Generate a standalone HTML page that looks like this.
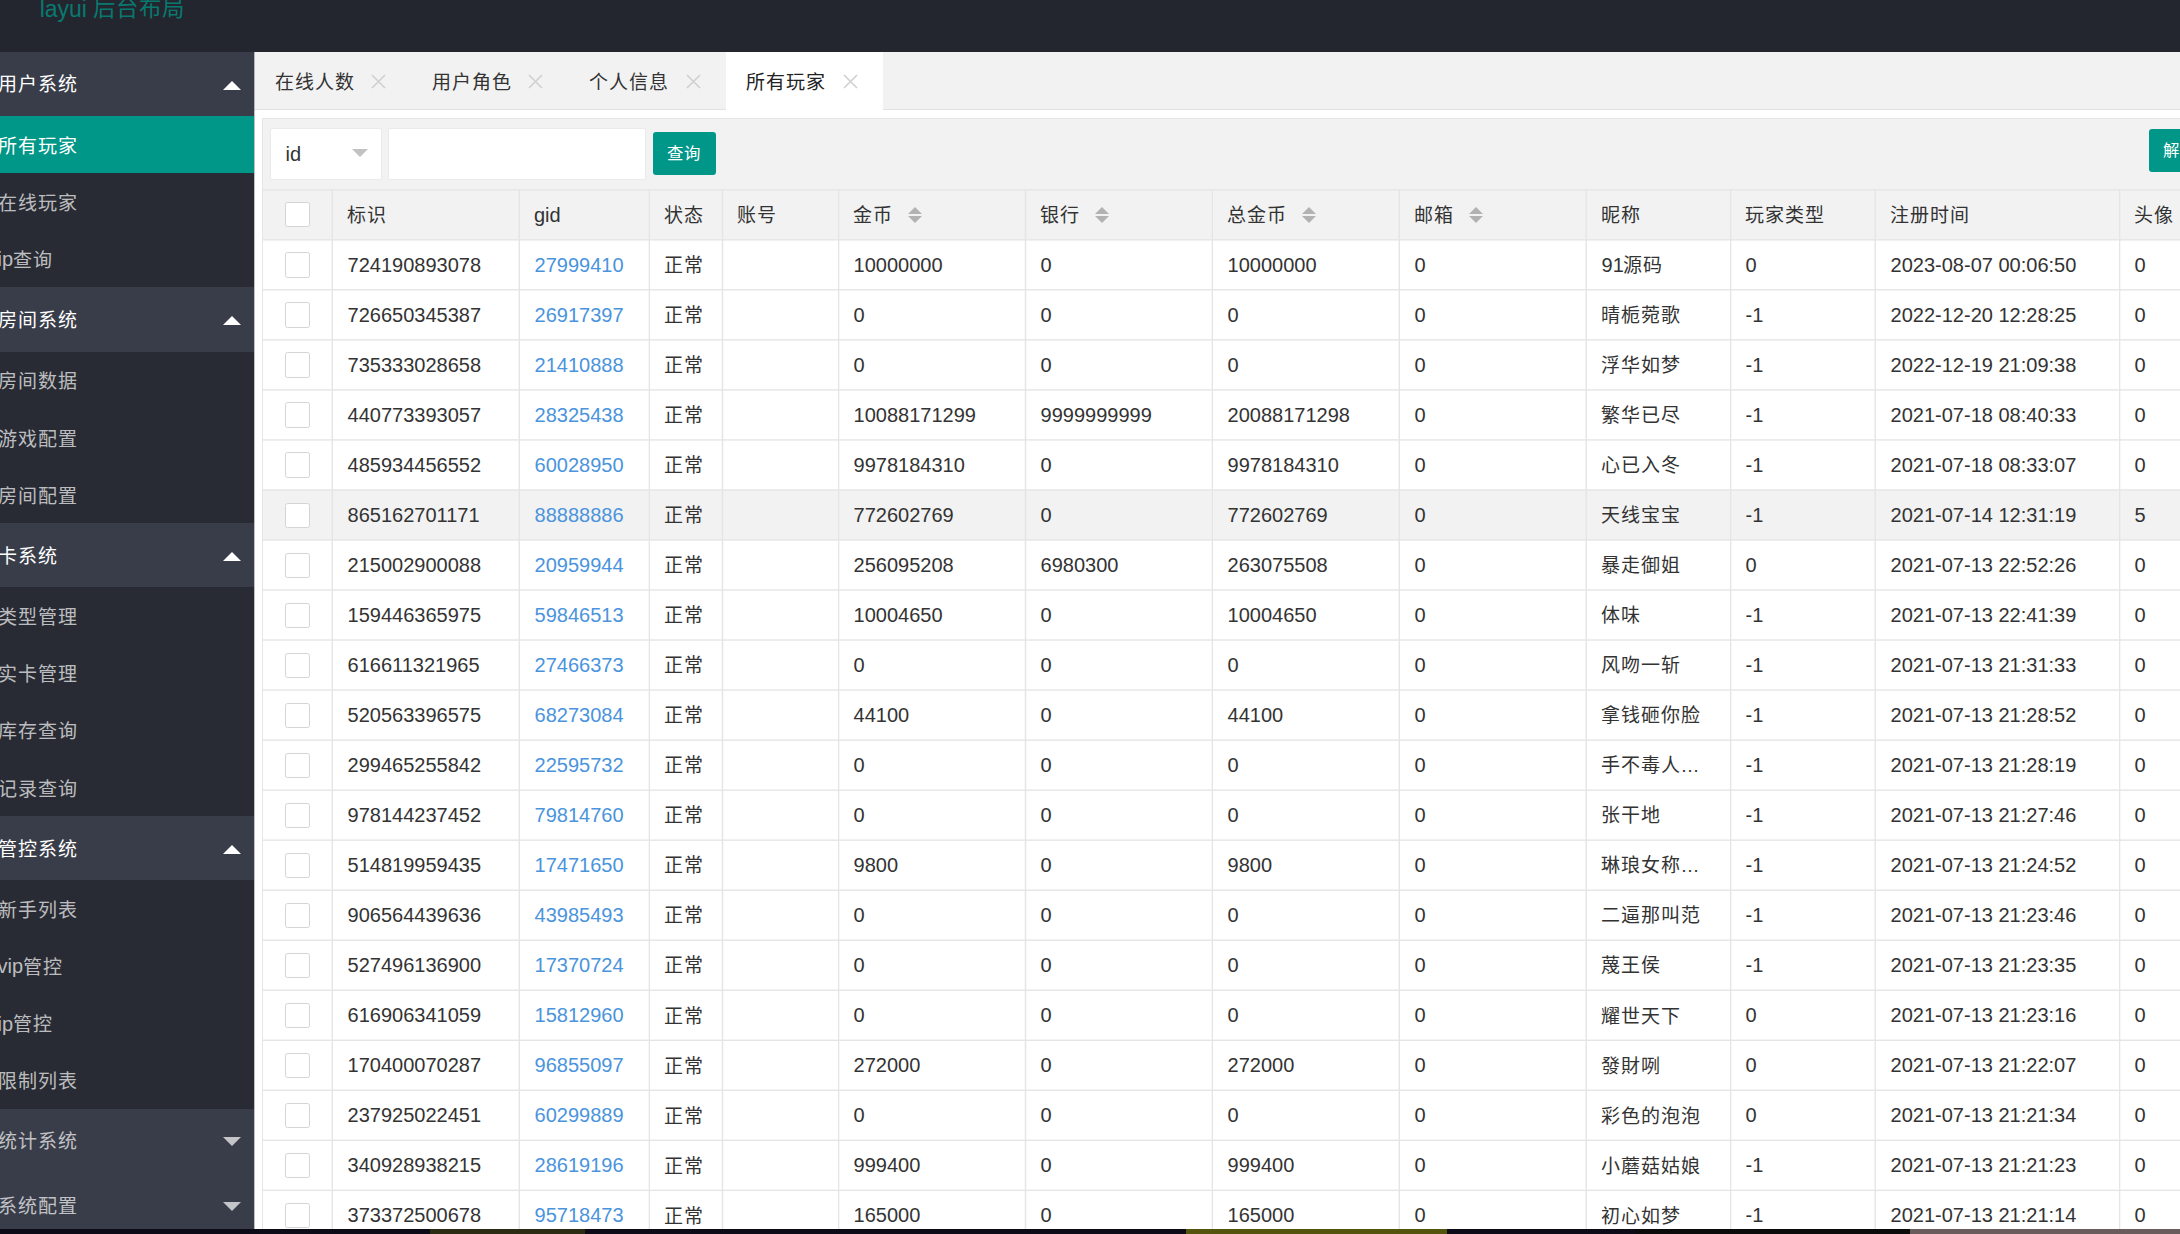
<!DOCTYPE html>
<html lang="zh-CN"><head><meta charset="utf-8"><title>layui 后台布局</title>
<style>
*{margin:0;padding:0;box-sizing:border-box}
html,body{width:2180px;height:1234px;overflow:hidden;background:#fff}
body{position:relative;font-family:"Liberation Sans",sans-serif;font-size:20px;color:#222}
.abs{position:absolute}
.k{position:relative;top:.3px;font-size:19px;letter-spacing:1px}
.t .k{left:-1px}
#hdr{left:0;top:0;width:2180px;height:52px;background:#23262e}
#logo{left:-30.5px;top:-2.5px;opacity:.74;width:286px;text-align:center;font-size:23px;line-height:23px;color:#009688;white-space:nowrap}
#side{left:0;top:51.8px;width:254px;height:1183px;background:#282b33;overflow:hidden}
.np{position:absolute;left:0;width:255px;height:64.28px;line-height:64.28px;background:#393d49;color:#fff;white-space:nowrap}
.np.c{color:rgba(255,255,255,.7)}
.nc{position:absolute;left:0;width:255px;height:57.14px;line-height:57.14px;color:rgba(255,255,255,.7);white-space:nowrap}
.nc.on{background:#009688;color:#fff}
.np>span,.nc>span{position:absolute;left:-2.5px;top:0}
.nc>span{top:1px}
.kk{position:relative;top:.6px;font-size:19px;letter-spacing:1px}
.up{position:absolute;left:222.9px;width:0;height:0;border-left:9px solid transparent;border-right:9px solid transparent;border-bottom:9px solid #fff}
.dn{position:absolute;left:222.9px;width:0;height:0;border-left:9px solid transparent;border-right:9px solid transparent;border-top:9px solid rgba(255,255,255,.7)}
#tabs{left:254px;top:52px;width:1926px;height:58px;background:#f2f2f2;border-bottom:1px solid #e2e2e2}
.tab{position:absolute;top:0;height:58px;line-height:58px;color:#333;white-space:nowrap}
.tab.on{background:#fff;height:58px;color:#222}
.tab>span{position:absolute;left:20px;top:.7px}
.tab svg{position:absolute;left:116.7px;top:21.6px}
#panel{left:262px;top:118px;width:1930px;height:1130px;border:1px solid #e6e6e6;background:#fff}
#tool{left:263px;top:119px;width:1917px;height:70px;background:#f2f2f2}
#sel{left:270px;top:127.5px;width:112px;height:52.5px;background:#fff;border:1px solid #eaeaea;border-radius:2px}
#sel span{position:absolute;left:14.5px;top:0;line-height:51px;color:#333}
#sel i{position:absolute;left:81.2px;top:20.9px;width:0;height:0;border-left:8px solid transparent;border-right:8px solid transparent;border-top:8px solid #c2c2c2}
#inp{left:388px;top:127.5px;width:258px;height:52.5px;background:#fff;border:1px solid #eaeaea;border-radius:2px}
.btn{position:absolute;height:43px;line-height:43px;background:#009688;color:#fff;font-size:17.2px;border-radius:3px;white-space:nowrap;padding:0 0 0 14.3px;width:63px}
#thead{left:263px;top:190px;width:1917px;height:49px;background:#f2f2f2}
.hl{position:absolute;left:263px;width:1917px;height:1px;background:#e5e5e5}
.vl{position:absolute;top:190px;width:1px;height:1045px;background:#e5e5e5}
.hov{position:absolute;left:263px;width:1917px;height:49px;background:#f2f2f2}
.t{position:absolute;height:50px;line-height:50px;white-space:nowrap;color:#333}
.th{position:absolute;height:50px;line-height:50px;white-space:nowrap;color:#333}
.lk{color:#4a94dd}
.cb{position:absolute;left:285px;width:25px;height:25.4px;background:#fff;border:1px solid #d4d4d4;border-radius:2.5px}
.st{position:absolute;width:0;height:0;border-left:7px solid transparent;border-right:7px solid transparent}
.st.u{border-bottom:7.2px solid #b2b2b2}
.st.d{border-top:7.2px solid #b2b2b2}
#bot{left:0;top:1229px;width:2180px;height:5px;background:#0d0b18}
#bot i{position:absolute;top:0;height:5px}
</style></head><body>

<div id="hdr" class="abs"></div>
<div id="logo" class="abs">layui <span class="k" style="top:-.7px;font-size:22.4px;letter-spacing:1px">后台布局</span></div>
<div id="side" class="abs">
<div class="np" style="top:0.00px"><span><span class="kk">用户系统</span></span></div>
<i class="up" style="top:28.84px"></i>
<div class="nc on" style="top:64.28px"><span><span class="kk">所有玩家</span></span></div>
<div class="nc" style="top:121.42px"><span><span class="kk">在线玩家</span></span></div>
<div class="nc" style="top:178.56px"><span>ip<span class="kk">查询</span></span></div>
<div class="np" style="top:235.70px"><span><span class="kk">房间系统</span></span></div>
<i class="up" style="top:264.54px"></i>
<div class="nc" style="top:299.99px"><span><span class="kk">房间数据</span></span></div>
<div class="nc" style="top:357.12px"><span><span class="kk">游戏配置</span></span></div>
<div class="nc" style="top:414.26px"><span><span class="kk">房间配置</span></span></div>
<div class="np" style="top:471.40px"><span><span class="kk">卡系统</span></span></div>
<i class="up" style="top:500.25px"></i>
<div class="nc" style="top:535.69px"><span><span class="kk">类型管理</span></span></div>
<div class="nc" style="top:592.83px"><span><span class="kk">实卡管理</span></span></div>
<div class="nc" style="top:649.97px"><span><span class="kk">库存查询</span></span></div>
<div class="nc" style="top:707.11px"><span><span class="kk">记录查询</span></span></div>
<div class="np" style="top:764.25px"><span><span class="kk">管控系统</span></span></div>
<i class="up" style="top:793.09px"></i>
<div class="nc" style="top:828.53px"><span><span class="kk">新手列表</span></span></div>
<div class="nc" style="top:885.67px"><span>vip<span class="kk">管控</span></span></div>
<div class="nc" style="top:942.81px"><span>ip<span class="kk">管控</span></span></div>
<div class="nc" style="top:999.95px"><span><span class="kk">限制列表</span></span></div>
<div class="np c" style="top:1057.09px"><span><span class="kk">统计系统</span></span></div>
<i class="dn" style="top:1085.43px"></i>
<div class="np c" style="top:1121.37px"><span><span class="kk">系统配置</span></span></div>
<i class="dn" style="top:1149.71px"></i>
<div class="np c" style="top:1185.65px"><span><span class="kk">日志系统</span></span></div>
<i class="dn" style="top:1214.00px"></i>
</div>
<div id="tabs" class="abs">
<div class="tab" style="left:0.7px;width:157.1px"><span><span class="k">在线人数</span></span><svg width="15" height="15" viewBox="0 0 15 15"><path d="M1 1L14 14M14 1L1 14" stroke="#d0d0d0" stroke-width="1.6" fill="none"/></svg></div>
<div class="tab" style="left:157.8px;width:157.1px"><span><span class="k">用户角色</span></span><svg width="15" height="15" viewBox="0 0 15 15"><path d="M1 1L14 14M14 1L1 14" stroke="#d0d0d0" stroke-width="1.6" fill="none"/></svg></div>
<div class="tab" style="left:314.9px;width:157.1px"><span><span class="k">个人信息</span></span><svg width="15" height="15" viewBox="0 0 15 15"><path d="M1 1L14 14M14 1L1 14" stroke="#d0d0d0" stroke-width="1.6" fill="none"/></svg></div>
<div class="tab on" style="left:472.0px;width:157.1px"><span><span class="k">所有玩家</span></span><svg width="15" height="15" viewBox="0 0 15 15"><path d="M1 1L14 14M14 1L1 14" stroke="#d0d0d0" stroke-width="1.6" fill="none"/></svg></div>
</div>
<div id="panel" class="abs"></div>
<div id="tool" class="abs"></div>
<div id="sel" class="abs"><span>id</span><i></i></div>
<div id="inp" class="abs"></div>
<div class="btn" style="left:653px;top:132px"><span class="k" style="top:-.2px;font-size:16.4px;letter-spacing:.8px">查询</span></div>
<div class="btn" style="left:2149px;top:129px"><span class="k" style="top:-.2px;font-size:16.4px;letter-spacing:.8px">解封</span></div>
<div id="thead" class="abs"></div>
<div class="hov" style="top:490px;height:50px"></div>
<div class="hl" style="top:189px;opacity:0.91"></div>
<div class="hl" style="top:190px;opacity:0.52"></div>
<div class="hl" style="top:239px;opacity:0.91"></div>
<div class="hl" style="top:240px;opacity:0.52"></div>
<div class="hl" style="top:289px;opacity:0.88"></div>
<div class="hl" style="top:290px;opacity:0.55"></div>
<div class="hl" style="top:339px;opacity:0.85"></div>
<div class="hl" style="top:340px;opacity:0.57"></div>
<div class="hl" style="top:389px;opacity:0.82"></div>
<div class="hl" style="top:390px;opacity:0.60"></div>
<div class="hl" style="top:439px;opacity:0.79"></div>
<div class="hl" style="top:440px;opacity:0.63"></div>
<div class="hl" style="top:489px;opacity:0.76"></div>
<div class="hl" style="top:490px;opacity:0.67"></div>
<div class="hl" style="top:539px;opacity:0.74"></div>
<div class="hl" style="top:540px;opacity:0.70"></div>
<div class="hl" style="top:589px;opacity:0.71"></div>
<div class="hl" style="top:590px;opacity:0.73"></div>
<div class="hl" style="top:639px;opacity:0.68"></div>
<div class="hl" style="top:640px;opacity:0.75"></div>
<div class="hl" style="top:689px;opacity:0.65"></div>
<div class="hl" style="top:690px;opacity:0.78"></div>
<div class="hl" style="top:739px;opacity:0.62"></div>
<div class="hl" style="top:740px;opacity:0.82"></div>
<div class="hl" style="top:789px;opacity:0.58"></div>
<div class="hl" style="top:790px;opacity:0.85"></div>
<div class="hl" style="top:839px;opacity:0.55"></div>
<div class="hl" style="top:840px;opacity:0.88"></div>
<div class="hl" style="top:889px;opacity:0.52"></div>
<div class="hl" style="top:890px;opacity:0.91"></div>
<div class="hl" style="top:939px;opacity:0.50"></div>
<div class="hl" style="top:940px;opacity:0.94"></div>
<div class="hl" style="top:989px;opacity:0.47"></div>
<div class="hl" style="top:990px;opacity:0.97"></div>
<div class="hl" style="top:1039px;opacity:0.43"></div>
<div class="hl" style="top:1040px;opacity:0.99"></div>
<div class="hl" style="top:1089px;opacity:0.40"></div>
<div class="hl" style="top:1090px;opacity:1.00"></div>
<div class="hl" style="top:1139px;opacity:0.38"></div>
<div class="hl" style="top:1140px;opacity:1.00"></div>
<div class="hl" style="top:1189px;opacity:0.34"></div>
<div class="hl" style="top:1190px;opacity:1.00"></div>
<div class="hl" style="top:1239px;opacity:0.31"></div>
<div class="hl" style="top:1240px;opacity:1.00"></div>
<div class="vl" style="left:331px;opacity:0.41"></div>
<div class="vl" style="left:332px;opacity:1.00"></div>
<div class="vl" style="left:518px;opacity:0.42"></div>
<div class="vl" style="left:519px;opacity:1.00"></div>
<div class="vl" style="left:648px;opacity:0.32"></div>
<div class="vl" style="left:649px;opacity:1.00"></div>
<div class="vl" style="left:721px;opacity:0.22"></div>
<div class="vl" style="left:722px;opacity:1.00"></div>
<div class="vl" style="left:723px;opacity:0.22"></div>
<div class="vl" style="left:838px;opacity:1.00"></div>
<div class="vl" style="left:839px;opacity:0.32"></div>
<div class="vl" style="left:1024px;opacity:0.21"></div>
<div class="vl" style="left:1025px;opacity:1.00"></div>
<div class="vl" style="left:1026px;opacity:0.21"></div>
<div class="vl" style="left:1211px;opacity:0.31"></div>
<div class="vl" style="left:1212px;opacity:1.00"></div>
<div class="vl" style="left:1398px;opacity:0.41"></div>
<div class="vl" style="left:1399px;opacity:1.00"></div>
<div class="vl" style="left:1585px;opacity:0.51"></div>
<div class="vl" style="left:1586px;opacity:0.91"></div>
<div class="vl" style="left:1730px;opacity:1.00"></div>
<div class="vl" style="left:1731px;opacity:0.31"></div>
<div class="vl" style="left:1874px;opacity:0.51"></div>
<div class="vl" style="left:1875px;opacity:0.91"></div>
<div class="vl" style="left:2119px;opacity:1.00"></div>
<div class="vl" style="left:2120px;opacity:0.32"></div>
<div class="cb" style="top:202px"></div>
<div class="th" style="left:347.0px;top:190px"><span class="k">标识</span></div>
<div class="th" style="left:534.0px;top:190px">gid</div>
<div class="th" style="left:664.0px;top:190px"><span class="k">状态</span></div>
<div class="th" style="left:737.0px;top:190px"><span class="k">账号</span></div>
<div class="th" style="left:853.0px;top:190px"><span class="k">金币</span></div>
<i class="st u" style="left:908.0px;top:206.5px"></i><i class="st d" style="left:908.0px;top:216.4px"></i>
<div class="th" style="left:1040.0px;top:190px"><span class="k">银行</span></div>
<i class="st u" style="left:1095.0px;top:206.5px"></i><i class="st d" style="left:1095.0px;top:216.4px"></i>
<div class="th" style="left:1227.0px;top:190px"><span class="k">总金币</span></div>
<i class="st u" style="left:1302.0px;top:206.5px"></i><i class="st d" style="left:1302.0px;top:216.4px"></i>
<div class="th" style="left:1414.0px;top:190px"><span class="k">邮箱</span></div>
<i class="st u" style="left:1469.0px;top:206.5px"></i><i class="st d" style="left:1469.0px;top:216.4px"></i>
<div class="th" style="left:1601.0px;top:190px"><span class="k">昵称</span></div>
<div class="th" style="left:1745.0px;top:190px"><span class="k">玩家类型</span></div>
<div class="th" style="left:1890.0px;top:190px"><span class="k">注册时间</span></div>
<div class="th" style="left:2134.0px;top:190px"><span class="k">头像</span></div>
<div class="cb" style="top:252.3px"></div>
<div class="t" style="left:347.6px;top:239.8px">724190893078</div>
<div class="t lk" style="left:534.6px;top:239.8px">27999410</div>
<div class="t" style="left:664.6px;top:239.8px"><span class="k">正常</span></div>
<div class="t" style="left:853.6px;top:239.8px">10000000</div>
<div class="t" style="left:1040.6px;top:239.8px">0</div>
<div class="t" style="left:1227.6px;top:239.8px">10000000</div>
<div class="t" style="left:1414.6px;top:239.8px">0</div>
<div class="t" style="left:1601.6px;top:239.8px">91<span class="k">源码</span></div>
<div class="t" style="left:1745.6px;top:239.8px">0</div>
<div class="t" style="left:1890.6px;top:239.8px">2023-08-07 00:06:50</div>
<div class="t" style="left:2134.6px;top:239.8px">0</div>
<div class="cb" style="top:302.3px"></div>
<div class="t" style="left:347.6px;top:289.8px">726650345387</div>
<div class="t lk" style="left:534.6px;top:289.8px">26917397</div>
<div class="t" style="left:664.6px;top:289.8px"><span class="k">正常</span></div>
<div class="t" style="left:853.6px;top:289.8px">0</div>
<div class="t" style="left:1040.6px;top:289.8px">0</div>
<div class="t" style="left:1227.6px;top:289.8px">0</div>
<div class="t" style="left:1414.6px;top:289.8px">0</div>
<div class="t" style="left:1601.6px;top:289.8px"><span class="k">晴栀菀歌</span></div>
<div class="t" style="left:1745.6px;top:289.8px">-1</div>
<div class="t" style="left:1890.6px;top:289.8px">2022-12-20 12:28:25</div>
<div class="t" style="left:2134.6px;top:289.8px">0</div>
<div class="cb" style="top:352.4px"></div>
<div class="t" style="left:347.6px;top:339.9px">735333028658</div>
<div class="t lk" style="left:534.6px;top:339.9px">21410888</div>
<div class="t" style="left:664.6px;top:339.9px"><span class="k">正常</span></div>
<div class="t" style="left:853.6px;top:339.9px">0</div>
<div class="t" style="left:1040.6px;top:339.9px">0</div>
<div class="t" style="left:1227.6px;top:339.9px">0</div>
<div class="t" style="left:1414.6px;top:339.9px">0</div>
<div class="t" style="left:1601.6px;top:339.9px"><span class="k">浮华如梦</span></div>
<div class="t" style="left:1745.6px;top:339.9px">-1</div>
<div class="t" style="left:1890.6px;top:339.9px">2022-12-19 21:09:38</div>
<div class="t" style="left:2134.6px;top:339.9px">0</div>
<div class="cb" style="top:402.4px"></div>
<div class="t" style="left:347.6px;top:389.9px">440773393057</div>
<div class="t lk" style="left:534.6px;top:389.9px">28325438</div>
<div class="t" style="left:664.6px;top:389.9px"><span class="k">正常</span></div>
<div class="t" style="left:853.6px;top:389.9px">10088171299</div>
<div class="t" style="left:1040.6px;top:389.9px">9999999999</div>
<div class="t" style="left:1227.6px;top:389.9px">20088171298</div>
<div class="t" style="left:1414.6px;top:389.9px">0</div>
<div class="t" style="left:1601.6px;top:389.9px"><span class="k">繁华已尽</span></div>
<div class="t" style="left:1745.6px;top:389.9px">-1</div>
<div class="t" style="left:1890.6px;top:389.9px">2021-07-18 08:40:33</div>
<div class="t" style="left:2134.6px;top:389.9px">0</div>
<div class="cb" style="top:452.4px"></div>
<div class="t" style="left:347.6px;top:439.9px">485934456552</div>
<div class="t lk" style="left:534.6px;top:439.9px">60028950</div>
<div class="t" style="left:664.6px;top:439.9px"><span class="k">正常</span></div>
<div class="t" style="left:853.6px;top:439.9px">9978184310</div>
<div class="t" style="left:1040.6px;top:439.9px">0</div>
<div class="t" style="left:1227.6px;top:439.9px">9978184310</div>
<div class="t" style="left:1414.6px;top:439.9px">0</div>
<div class="t" style="left:1601.6px;top:439.9px"><span class="k">心已入冬</span></div>
<div class="t" style="left:1745.6px;top:439.9px">-1</div>
<div class="t" style="left:1890.6px;top:439.9px">2021-07-18 08:33:07</div>
<div class="t" style="left:2134.6px;top:439.9px">0</div>
<div class="cb" style="top:502.5px"></div>
<div class="t" style="left:347.6px;top:490.0px">865162701171</div>
<div class="t lk" style="left:534.6px;top:490.0px">88888886</div>
<div class="t" style="left:664.6px;top:490.0px"><span class="k">正常</span></div>
<div class="t" style="left:853.6px;top:490.0px">772602769</div>
<div class="t" style="left:1040.6px;top:490.0px">0</div>
<div class="t" style="left:1227.6px;top:490.0px">772602769</div>
<div class="t" style="left:1414.6px;top:490.0px">0</div>
<div class="t" style="left:1601.6px;top:490.0px"><span class="k">天线宝宝</span></div>
<div class="t" style="left:1745.6px;top:490.0px">-1</div>
<div class="t" style="left:1890.6px;top:490.0px">2021-07-14 12:31:19</div>
<div class="t" style="left:2134.6px;top:490.0px">5</div>
<div class="cb" style="top:552.5px"></div>
<div class="t" style="left:347.6px;top:540.0px">215002900088</div>
<div class="t lk" style="left:534.6px;top:540.0px">20959944</div>
<div class="t" style="left:664.6px;top:540.0px"><span class="k">正常</span></div>
<div class="t" style="left:853.6px;top:540.0px">256095208</div>
<div class="t" style="left:1040.6px;top:540.0px">6980300</div>
<div class="t" style="left:1227.6px;top:540.0px">263075508</div>
<div class="t" style="left:1414.6px;top:540.0px">0</div>
<div class="t" style="left:1601.6px;top:540.0px"><span class="k">暴走御姐</span></div>
<div class="t" style="left:1745.6px;top:540.0px">0</div>
<div class="t" style="left:1890.6px;top:540.0px">2021-07-13 22:52:26</div>
<div class="t" style="left:2134.6px;top:540.0px">0</div>
<div class="cb" style="top:602.5px"></div>
<div class="t" style="left:347.6px;top:590.0px">159446365975</div>
<div class="t lk" style="left:534.6px;top:590.0px">59846513</div>
<div class="t" style="left:664.6px;top:590.0px"><span class="k">正常</span></div>
<div class="t" style="left:853.6px;top:590.0px">10004650</div>
<div class="t" style="left:1040.6px;top:590.0px">0</div>
<div class="t" style="left:1227.6px;top:590.0px">10004650</div>
<div class="t" style="left:1414.6px;top:590.0px">0</div>
<div class="t" style="left:1601.6px;top:590.0px"><span class="k">体味</span></div>
<div class="t" style="left:1745.6px;top:590.0px">-1</div>
<div class="t" style="left:1890.6px;top:590.0px">2021-07-13 22:41:39</div>
<div class="t" style="left:2134.6px;top:590.0px">0</div>
<div class="cb" style="top:652.6px"></div>
<div class="t" style="left:347.6px;top:640.1px">616611321965</div>
<div class="t lk" style="left:534.6px;top:640.1px">27466373</div>
<div class="t" style="left:664.6px;top:640.1px"><span class="k">正常</span></div>
<div class="t" style="left:853.6px;top:640.1px">0</div>
<div class="t" style="left:1040.6px;top:640.1px">0</div>
<div class="t" style="left:1227.6px;top:640.1px">0</div>
<div class="t" style="left:1414.6px;top:640.1px">0</div>
<div class="t" style="left:1601.6px;top:640.1px"><span class="k">风吻一斩</span></div>
<div class="t" style="left:1745.6px;top:640.1px">-1</div>
<div class="t" style="left:1890.6px;top:640.1px">2021-07-13 21:31:33</div>
<div class="t" style="left:2134.6px;top:640.1px">0</div>
<div class="cb" style="top:702.6px"></div>
<div class="t" style="left:347.6px;top:690.1px">520563396575</div>
<div class="t lk" style="left:534.6px;top:690.1px">68273084</div>
<div class="t" style="left:664.6px;top:690.1px"><span class="k">正常</span></div>
<div class="t" style="left:853.6px;top:690.1px">44100</div>
<div class="t" style="left:1040.6px;top:690.1px">0</div>
<div class="t" style="left:1227.6px;top:690.1px">44100</div>
<div class="t" style="left:1414.6px;top:690.1px">0</div>
<div class="t" style="left:1601.6px;top:690.1px"><span class="k">拿钱砸你脸</span></div>
<div class="t" style="left:1745.6px;top:690.1px">-1</div>
<div class="t" style="left:1890.6px;top:690.1px">2021-07-13 21:28:52</div>
<div class="t" style="left:2134.6px;top:690.1px">0</div>
<div class="cb" style="top:752.6px"></div>
<div class="t" style="left:347.6px;top:740.1px">299465255842</div>
<div class="t lk" style="left:534.6px;top:740.1px">22595732</div>
<div class="t" style="left:664.6px;top:740.1px"><span class="k">正常</span></div>
<div class="t" style="left:853.6px;top:740.1px">0</div>
<div class="t" style="left:1040.6px;top:740.1px">0</div>
<div class="t" style="left:1227.6px;top:740.1px">0</div>
<div class="t" style="left:1414.6px;top:740.1px">0</div>
<div class="t" style="left:1601.6px;top:740.1px"><span class="k">手不毒人…</span></div>
<div class="t" style="left:1745.6px;top:740.1px">-1</div>
<div class="t" style="left:1890.6px;top:740.1px">2021-07-13 21:28:19</div>
<div class="t" style="left:2134.6px;top:740.1px">0</div>
<div class="cb" style="top:802.6px"></div>
<div class="t" style="left:347.6px;top:790.1px">978144237452</div>
<div class="t lk" style="left:534.6px;top:790.1px">79814760</div>
<div class="t" style="left:664.6px;top:790.1px"><span class="k">正常</span></div>
<div class="t" style="left:853.6px;top:790.1px">0</div>
<div class="t" style="left:1040.6px;top:790.1px">0</div>
<div class="t" style="left:1227.6px;top:790.1px">0</div>
<div class="t" style="left:1414.6px;top:790.1px">0</div>
<div class="t" style="left:1601.6px;top:790.1px"><span class="k">张干地</span></div>
<div class="t" style="left:1745.6px;top:790.1px">-1</div>
<div class="t" style="left:1890.6px;top:790.1px">2021-07-13 21:27:46</div>
<div class="t" style="left:2134.6px;top:790.1px">0</div>
<div class="cb" style="top:852.7px"></div>
<div class="t" style="left:347.6px;top:840.2px">514819959435</div>
<div class="t lk" style="left:534.6px;top:840.2px">17471650</div>
<div class="t" style="left:664.6px;top:840.2px"><span class="k">正常</span></div>
<div class="t" style="left:853.6px;top:840.2px">9800</div>
<div class="t" style="left:1040.6px;top:840.2px">0</div>
<div class="t" style="left:1227.6px;top:840.2px">9800</div>
<div class="t" style="left:1414.6px;top:840.2px">0</div>
<div class="t" style="left:1601.6px;top:840.2px"><span class="k">琳琅女称…</span></div>
<div class="t" style="left:1745.6px;top:840.2px">-1</div>
<div class="t" style="left:1890.6px;top:840.2px">2021-07-13 21:24:52</div>
<div class="t" style="left:2134.6px;top:840.2px">0</div>
<div class="cb" style="top:902.7px"></div>
<div class="t" style="left:347.6px;top:890.2px">906564439636</div>
<div class="t lk" style="left:534.6px;top:890.2px">43985493</div>
<div class="t" style="left:664.6px;top:890.2px"><span class="k">正常</span></div>
<div class="t" style="left:853.6px;top:890.2px">0</div>
<div class="t" style="left:1040.6px;top:890.2px">0</div>
<div class="t" style="left:1227.6px;top:890.2px">0</div>
<div class="t" style="left:1414.6px;top:890.2px">0</div>
<div class="t" style="left:1601.6px;top:890.2px"><span class="k">二逼那叫范</span></div>
<div class="t" style="left:1745.6px;top:890.2px">-1</div>
<div class="t" style="left:1890.6px;top:890.2px">2021-07-13 21:23:46</div>
<div class="t" style="left:2134.6px;top:890.2px">0</div>
<div class="cb" style="top:952.7px"></div>
<div class="t" style="left:347.6px;top:940.2px">527496136900</div>
<div class="t lk" style="left:534.6px;top:940.2px">17370724</div>
<div class="t" style="left:664.6px;top:940.2px"><span class="k">正常</span></div>
<div class="t" style="left:853.6px;top:940.2px">0</div>
<div class="t" style="left:1040.6px;top:940.2px">0</div>
<div class="t" style="left:1227.6px;top:940.2px">0</div>
<div class="t" style="left:1414.6px;top:940.2px">0</div>
<div class="t" style="left:1601.6px;top:940.2px"><span class="k">蔑王侯</span></div>
<div class="t" style="left:1745.6px;top:940.2px">-1</div>
<div class="t" style="left:1890.6px;top:940.2px">2021-07-13 21:23:35</div>
<div class="t" style="left:2134.6px;top:940.2px">0</div>
<div class="cb" style="top:1002.8px"></div>
<div class="t" style="left:347.6px;top:990.3px">616906341059</div>
<div class="t lk" style="left:534.6px;top:990.3px">15812960</div>
<div class="t" style="left:664.6px;top:990.3px"><span class="k">正常</span></div>
<div class="t" style="left:853.6px;top:990.3px">0</div>
<div class="t" style="left:1040.6px;top:990.3px">0</div>
<div class="t" style="left:1227.6px;top:990.3px">0</div>
<div class="t" style="left:1414.6px;top:990.3px">0</div>
<div class="t" style="left:1601.6px;top:990.3px"><span class="k">耀世天下</span></div>
<div class="t" style="left:1745.6px;top:990.3px">0</div>
<div class="t" style="left:1890.6px;top:990.3px">2021-07-13 21:23:16</div>
<div class="t" style="left:2134.6px;top:990.3px">0</div>
<div class="cb" style="top:1052.8px"></div>
<div class="t" style="left:347.6px;top:1040.3px">170400070287</div>
<div class="t lk" style="left:534.6px;top:1040.3px">96855097</div>
<div class="t" style="left:664.6px;top:1040.3px"><span class="k">正常</span></div>
<div class="t" style="left:853.6px;top:1040.3px">272000</div>
<div class="t" style="left:1040.6px;top:1040.3px">0</div>
<div class="t" style="left:1227.6px;top:1040.3px">272000</div>
<div class="t" style="left:1414.6px;top:1040.3px">0</div>
<div class="t" style="left:1601.6px;top:1040.3px"><span class="k">發財咧</span></div>
<div class="t" style="left:1745.6px;top:1040.3px">0</div>
<div class="t" style="left:1890.6px;top:1040.3px">2021-07-13 21:22:07</div>
<div class="t" style="left:2134.6px;top:1040.3px">0</div>
<div class="cb" style="top:1102.8px"></div>
<div class="t" style="left:347.6px;top:1090.3px">237925022451</div>
<div class="t lk" style="left:534.6px;top:1090.3px">60299889</div>
<div class="t" style="left:664.6px;top:1090.3px"><span class="k">正常</span></div>
<div class="t" style="left:853.6px;top:1090.3px">0</div>
<div class="t" style="left:1040.6px;top:1090.3px">0</div>
<div class="t" style="left:1227.6px;top:1090.3px">0</div>
<div class="t" style="left:1414.6px;top:1090.3px">0</div>
<div class="t" style="left:1601.6px;top:1090.3px"><span class="k">彩色的泡泡</span></div>
<div class="t" style="left:1745.6px;top:1090.3px">0</div>
<div class="t" style="left:1890.6px;top:1090.3px">2021-07-13 21:21:34</div>
<div class="t" style="left:2134.6px;top:1090.3px">0</div>
<div class="cb" style="top:1152.9px"></div>
<div class="t" style="left:347.6px;top:1140.4px">340928938215</div>
<div class="t lk" style="left:534.6px;top:1140.4px">28619196</div>
<div class="t" style="left:664.6px;top:1140.4px"><span class="k">正常</span></div>
<div class="t" style="left:853.6px;top:1140.4px">999400</div>
<div class="t" style="left:1040.6px;top:1140.4px">0</div>
<div class="t" style="left:1227.6px;top:1140.4px">999400</div>
<div class="t" style="left:1414.6px;top:1140.4px">0</div>
<div class="t" style="left:1601.6px;top:1140.4px"><span class="k">小蘑菇姑娘</span></div>
<div class="t" style="left:1745.6px;top:1140.4px">-1</div>
<div class="t" style="left:1890.6px;top:1140.4px">2021-07-13 21:21:23</div>
<div class="t" style="left:2134.6px;top:1140.4px">0</div>
<div class="cb" style="top:1202.9px"></div>
<div class="t" style="left:347.6px;top:1190.4px">373372500678</div>
<div class="t lk" style="left:534.6px;top:1190.4px">95718473</div>
<div class="t" style="left:664.6px;top:1190.4px"><span class="k">正常</span></div>
<div class="t" style="left:853.6px;top:1190.4px">165000</div>
<div class="t" style="left:1040.6px;top:1190.4px">0</div>
<div class="t" style="left:1227.6px;top:1190.4px">165000</div>
<div class="t" style="left:1414.6px;top:1190.4px">0</div>
<div class="t" style="left:1601.6px;top:1190.4px"><span class="k">初心如梦</span></div>
<div class="t" style="left:1745.6px;top:1190.4px">-1</div>
<div class="t" style="left:1890.6px;top:1190.4px">2021-07-13 21:21:14</div>
<div class="t" style="left:2134.6px;top:1190.4px">0</div>
<div id="bot" class="abs"><i style="left:430px;width:155px;background:#2c2c14"></i><i style="left:1186px;width:261px;background:#54540f"></i><i style="left:1635px;width:275px;background:#0b0b0b"></i><i style="left:1910px;width:270px;background:#6a5c5c"></i></div>
<div class="abs" style="left:254px;top:52px;width:1px;height:1177px;background:rgba(40,43,51,.3)"></div>
</body></html>
